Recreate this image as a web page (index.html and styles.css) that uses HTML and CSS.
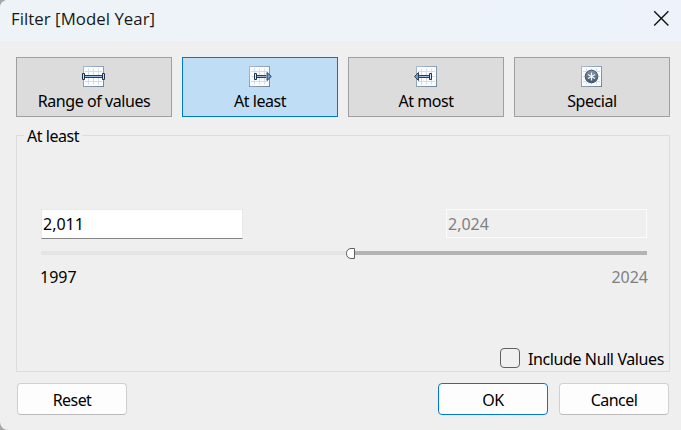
FILE: index.html
```html
<!DOCTYPE html>
<html lang="en">
<head>
<meta charset="utf-8">
<title>Filter [Model Year]</title>
<link rel="stylesheet" href="styles.css">
</head>
<body>
<svg width="0" height="0" class="defs">
  <defs>
    <linearGradient id="edge" x2="1" y2="1"><stop stop-color="#a9b9ca"/><stop offset="1" stop-color="#6f849b"/></linearGradient>
    <linearGradient id="ball" x2="0" y2="1"><stop stop-color="#8296ae"/><stop offset="1" stop-color="#42566e"/></linearGradient>
    <g id="sheet">
      <rect x="2.5" y=".5" width="20" height="20" fill="#fbfcfd" stroke="url(#edge)"/>
      <path d="M7.5 2.5v16M12.5 2.5v16M17.5 2.5v16M4 5.5h17M4 10.5h17M4 15.5h17" stroke="#d3dde9" fill="none"/>
    </g>
  </defs>
</svg>
<div class="dialog">
  <header class="titlebar">
    <h1>Filter [Model Year]</h1>
    <svg class="close" width="17" height="17" viewBox="0 0 17 17"><path d="M1.2 1.2l14.2 14.2M15.4 1.2L1.2 15.4" stroke="#111" stroke-width="1.4" fill="none"/></svg>
  </header>
  <main>
    <nav class="modes">
      <button class="mode"><svg class="icon" width="26" height="21" viewBox="0 0 26 21"><use href="#sheet"/><path d="M4 9h18v3H4z" fill="#2d3e56"/><path d="M4 10.5h18" stroke="#9bb9e2"/><path d="M1.500 7.500h2v6h-2zM21.500 7.500h2v6h-2z" fill="#c9daf0" stroke="#1f334c"/></svg><span>Range of values</span></button>
      <button class="mode selected"><svg class="icon" width="26" height="21" viewBox="0 0 26 21"><use href="#sheet"/><path d="M9 9h10v3H9z" fill="#2d3e56"/><path d="M9 10.5h10" stroke="#9bb9e2"/><path d="M7.5 7.5h2v6h-2z" fill="#d8e4f3" stroke="#1f334c"/><path d="M20 6.500v8l4.300-4z" fill="#789bc5" stroke="#2d425c"/></svg><span>At least</span></button>
      <button class="mode most"><svg class="icon" width="26" height="21" viewBox="0 0 26 21"><use href="#sheet"/><path d="M4 9h12v3H4z" fill="#2d3e56"/><path d="M5 10.5h11" stroke="#9bb9e2"/><path d="M15.5 7.5h2v6h-2z" fill="#d8e4f3" stroke="#1f334c"/><path d="M4.500 6.500v8l-4-4z" fill="#789bc5" stroke="#2d425c"/></svg><span>At most</span></button>
      <button class="mode"><svg class="icon" width="26" height="21" viewBox="0 0 26 21"><use href="#sheet"/><circle cx="12.500" cy="10.500" r="6.300" fill="url(#ball)" stroke="#405470"/><path d="M12.500 6.500v8M9 8.500l7 4M16 8.500l-7 4" stroke="#f3f7fc" stroke-width="1.300"/></svg><span>Special</span></button>
    </nav>
    <fieldset class="group">
      <legend>At least</legend>
      <div class="fields">
        <div class="field">2,011</div>
        <div class="field disabled">2,024</div>
      </div>
      <div class="slider">
        <div class="track"></div>
        <svg class="thumb" width="10" height="12" viewBox="0 0 10 12"><path d="M8.500.5v10H5Q.5 10 .5 5.500T5 .5z" fill="#fff" stroke="#5e5e5e"/></svg>
        <div class="track active"></div>
      </div>
      <div class="limits"><span>1997</span><span class="off">2024</span></div>
      <label class="nulls"><i class="box"></i><span>Include Null Values</span></label>
    </fieldset>
    <footer class="actions">
      <button class="btn reset">Reset</button>
      <button class="btn primary">OK</button>
      <button class="btn">Cancel</button>
    </footer>
  </main>
</div>
</body>
</html>
```
FILE: styles.css
```css
* { box-sizing: border-box; }
body { margin: 0; background: #a5a7a8; font: 16px/20px "Noto Sans", "Open Sans", sans-serif; color: #000; overflow: hidden; }
.defs { display: block; height: 0; }
.dialog { width: 681px; height: 430px; background: #efefef; border-radius: 8px 0 0 8px; overflow: hidden; }
.titlebar { height: 41px; padding: 0 11px; background: linear-gradient(110deg, #edf3f7, #eef3fb); display: flex; justify-content: space-between; align-items: flex-start; }
h1 { margin: 9px 0 0; font: 16.8px/20px "Open Sans", "Noto Sans", sans-serif; letter-spacing: 0.05px; color: #181818; }
.close { margin-top: 10px; }
main { padding: 16px 11px 0 16px; }
button { font: inherit; color: inherit; padding: 0; margin: 0; white-space: nowrap; }
.modes { display: flex; gap: 10px; }
.mode { width: 156px; height: 60px; background: #dcdcdc; border: 1px solid #a0a0a0; display: flex; flex-direction: column; align-items: center; justify-content: flex-start; padding-top: 8px; letter-spacing: -0.44px; }
.mode.selected { background: #bfddf5; border-color: #0078d4; }
.icon { display: block; margin-bottom: 4px; flex: none; }
.most .icon { margin-left: 2px; }
.group { margin: 8px 0 0; width: 654px; height: 247px; border: 1px solid #dcdcdc; padding: 0; min-width: 0; }
legend { margin-left: 7px; padding: 1px 3px 0; height: 20px; line-height: 20px; letter-spacing: -0.46px; }
.fields { display: flex; justify-content: space-between; margin: 64px 22px 0 24px; }
.field { width: 202px; height: 30px; padding: 4px 1px; background: #fff; border: 1px solid #e9e9e9; border-bottom-color: #858585; }
.field.disabled { width: 201px; height: 29px; background: #efefef; border: 1px solid #fbfbfb; color: #808080; }
.slider { display: flex; align-items: flex-start; height: 12px; margin: 9px 22px 0 24px; }
.track { width: 305px; height: 4px; margin-top: 3px; background: #e5e5e5; }
.track.active { flex: 1; margin-left: -1px; background: #b3b3b3; }
.thumb { flex: none; }
.limits { display: flex; justify-content: space-between; margin: 7px 21px 0 23px; }
.off { color: #808080; }
.nulls { display: flex; justify-content: flex-end; align-items: center; margin: 61px 5px 0 0; gap: 8px; letter-spacing: -0.39px; }
.nulls span { height: 20px; padding-top: 1px; }
.box { width: 20px; height: 20px; border: 1px solid #606060; border-radius: 4px; background: #f0f0f0; }
.actions { display: flex; gap: 11px; margin-top: 11px; padding: 0 1px; }
.btn { width: 110px; height: 32px; padding-top: 1px; letter-spacing: -0.55px; background: #fdfdfd; border: 1px solid #d0d0d0; border-bottom-color: #bababa; border-radius: 4px; }
.reset { margin-right: auto; }
.primary { border-color: #0078d4; }
```
